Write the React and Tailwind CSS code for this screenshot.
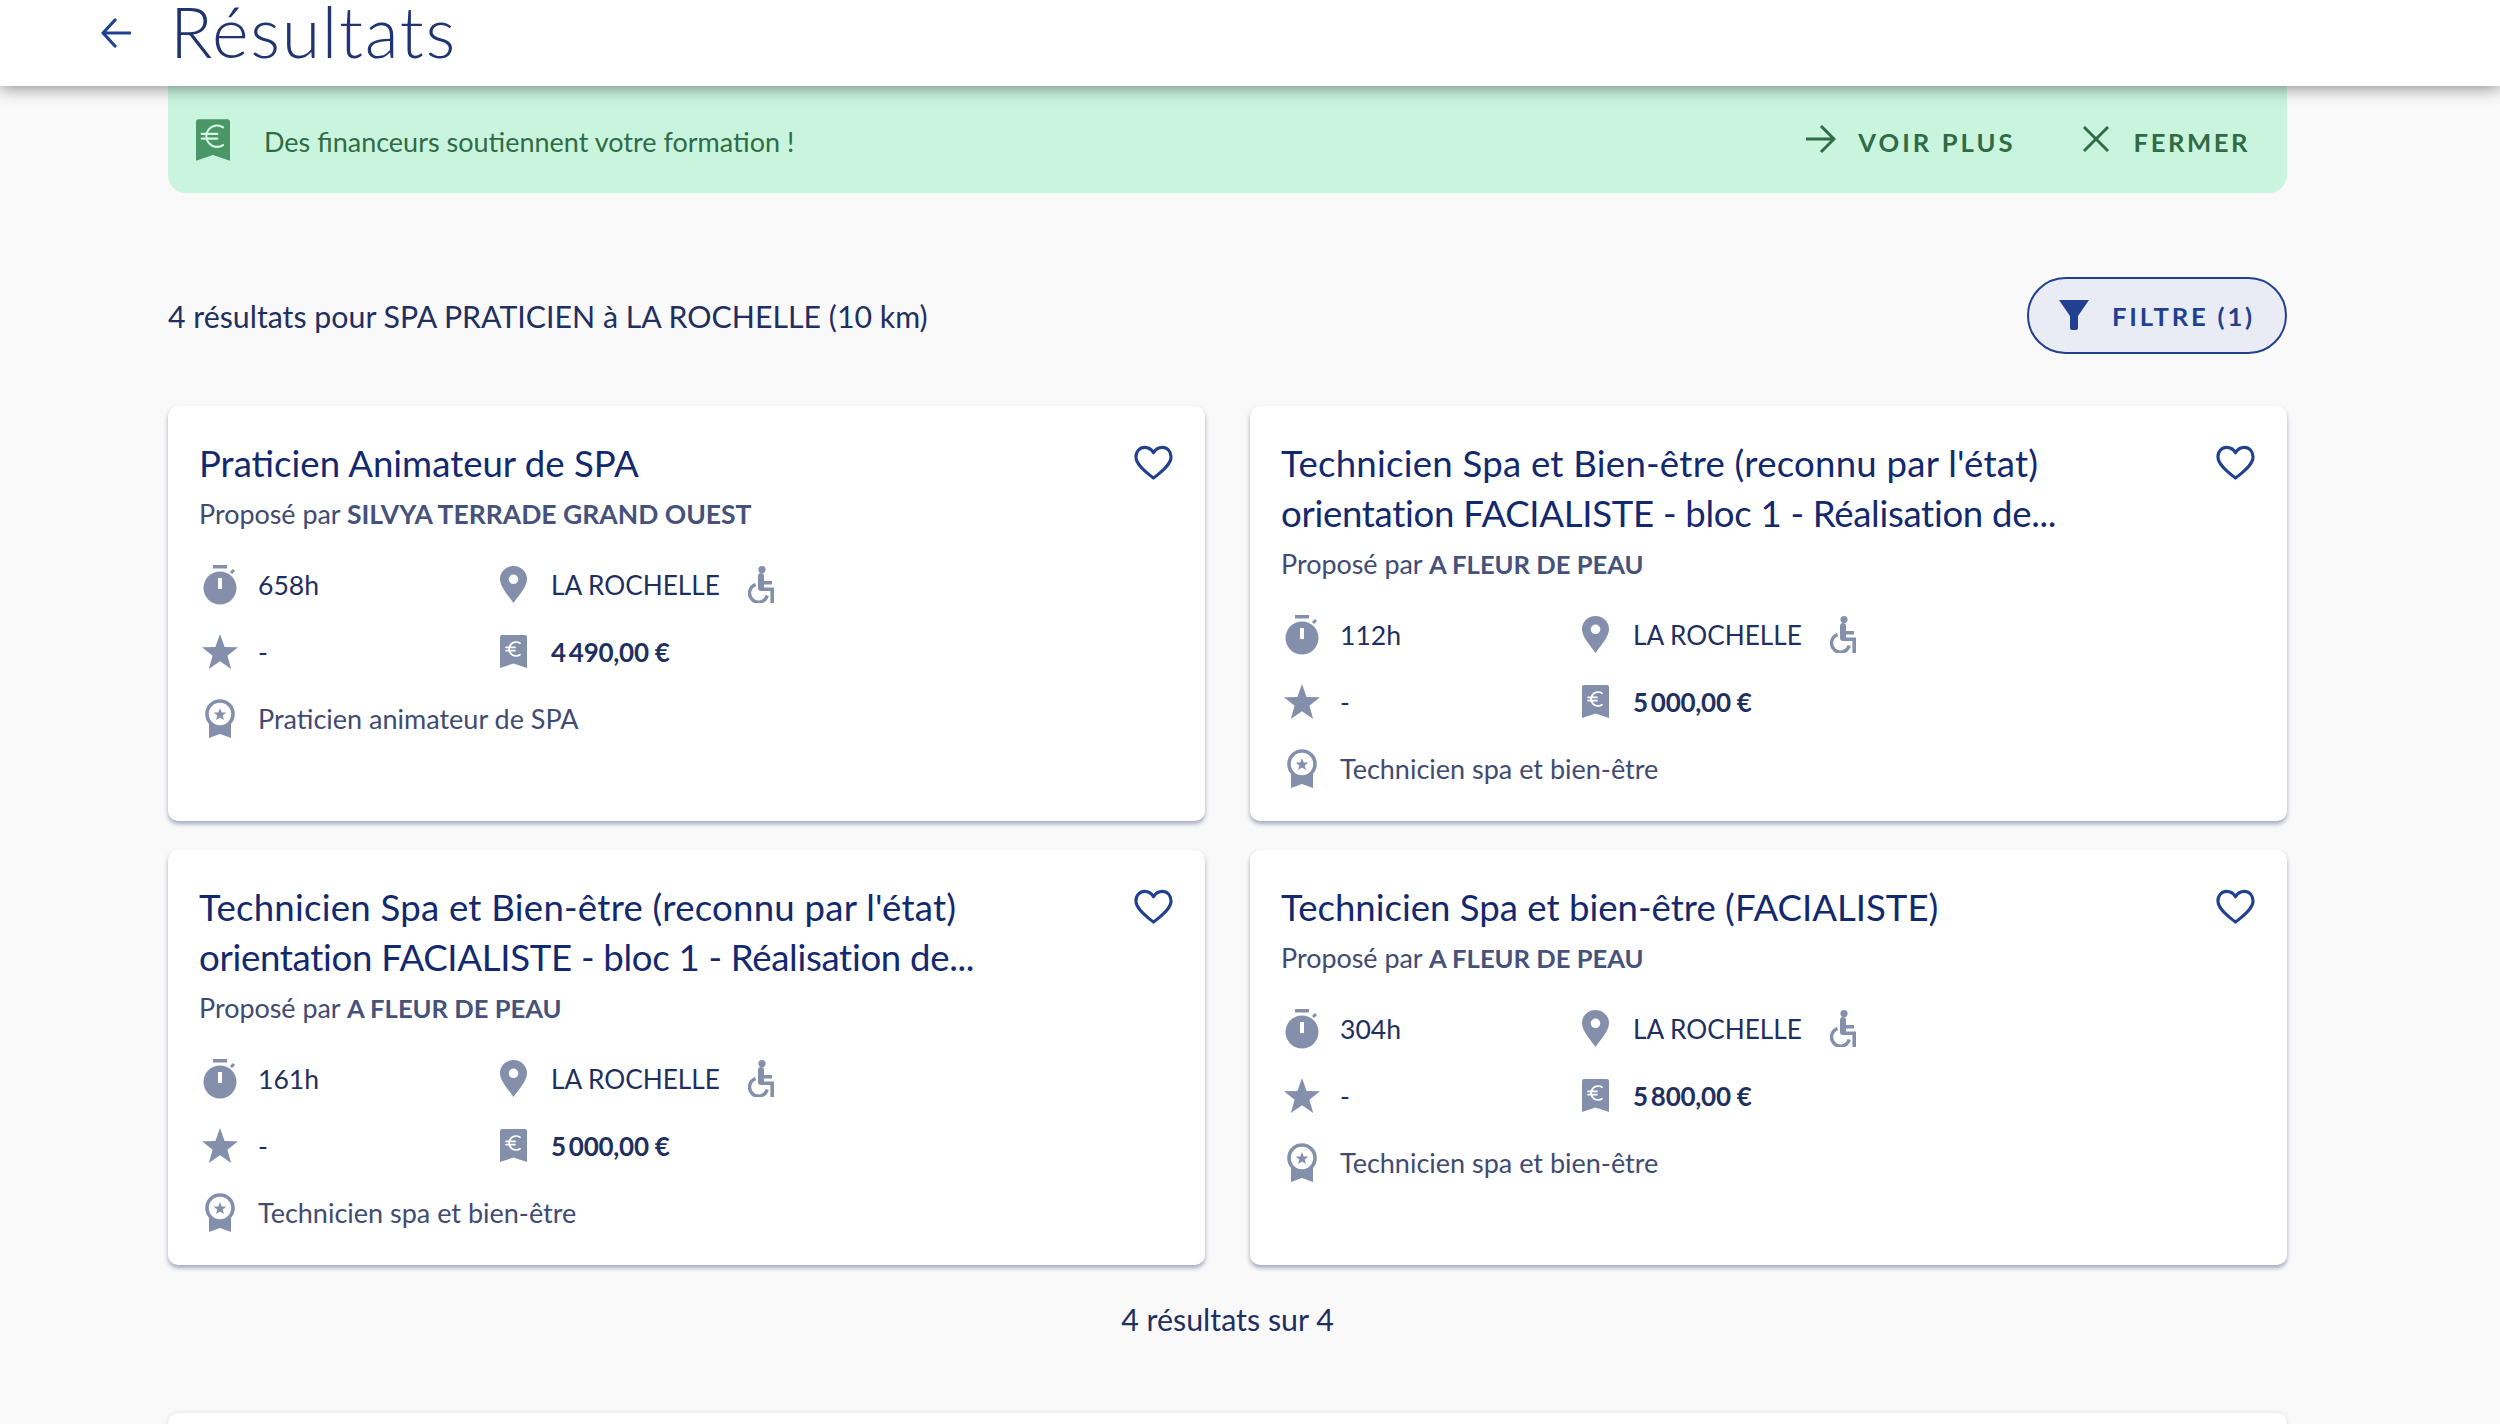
import React from "react";

const Stopwatch = () => (
  <svg viewBox="0 0 34 40" className="w-[34px] h-[40px]">
    <rect x="10" y="0" width="14" height="3.5" fill="#8490ab" />
    <path d="M28 8 L31 5" stroke="#8490ab" strokeWidth="3" />
    <circle cx="17" cy="23" r="16.5" fill="#8490ab" />
    <rect x="15" y="13" width="4" height="11" fill="#fff" />
  </svg>
);
const Star = () => (
  <svg viewBox="0 0 36 35" className="w-[36px] h-[35px]">
    <path d="M18 0 L22.6 12.9 L36 13.3 L25.4 21.7 L29.2 35 L18 27.3 L6.8 35 L10.6 21.7 L0 13.3 L13.4 12.9 Z" fill="#8490ab" />
  </svg>
);
const Medal = () => (
  <svg viewBox="0 0 30 40" className="w-[30px] h-[40px]">
    <path d="M4 23 V39 L15 35 L26 39 V23 Z" fill="#8490ab" />
    <circle cx="15" cy="15" r="13" fill="#fff" stroke="#8490ab" strokeWidth="3.6" />
    <path d="M15 9 L16.7 13.4 L21.4 13.6 L17.7 16.5 L19 21 L15 18.4 L11 21 L12.3 16.5 L8.6 13.6 L13.3 13.4 Z" fill="#8490ab" />
  </svg>
);
const Pin = () => (
  <svg viewBox="0 0 27 37" className="w-[27px] h-[37px]">
    <path fillRule="evenodd" d="M13.5 0 C21 0 27 5.8 27 13 C27 21 19 29 13.5 37 C8 29 0 21 0 13 C0 5.8 6 0 13.5 0 Z M13.5 8.5 A4.8 4.8 0 1 0 13.5 18.1 A4.8 4.8 0 1 0 13.5 8.5 Z" fill="#8490ab" />
  </svg>
);
const Euro = ({ fill, stroke, w, h, d }) => (
  <svg viewBox="0 0 27 33" style={{ width: w, height: h }}>
    <path d="M2 0 H25 A2 2 0 0 1 27 2 V33 L13.5 28.5 L0 33 V2 A2 2 0 0 1 2 0 Z" fill={fill} />
    <path d={d} fill="none" stroke={stroke} strokeWidth="1.7" strokeLinecap="round" />
  </svg>
);
const Wheelchair = () => (
  <svg viewBox="0 0 26 37" className="w-[26px] h-[37px]">
    <circle cx="14" cy="3.6" r="3.6" fill="#8490ab" />
    <path d="M10 10 A3 3 0 0 1 16 10 V15 H24 V18.4 H16 V21.5 H26 V37 H22.4 V25 H13 A3 3 0 0 1 10 22 Z" fill="#8490ab" />
    <path d="M7.6 18.6 A9 9 0 1 0 19.2 29.5" fill="none" stroke="#8490ab" strokeWidth="3.4" />
  </svg>
);
const Heart = () => (
  <svg viewBox="0 0 40 36" className="w-[39px] h-[36px]">
    <path d="M20 33.5 C14 28.5 2 20.5 2 11.5 C2 6 6 2 11 2 C14.8 2 18 4 20 7.5 C22 4 25.2 2 29 2 C34 2 38 6 38 11.5 C38 20.5 26 28.5 20 33.5 Z" fill="none" stroke="#21408f" strokeWidth="3.2" strokeLinejoin="round" />
  </svg>
);

const cards = [
  { lines: [["Praticien Animateur de SPA", ""]], org: "SILVYA TERRADE GRAND OUEST", orgCls: "font-bold text-[26.5px] text-[#45527c]", h: "658h", price: "4\u2009490,00 €", cert: "Praticien animateur de SPA" },
  { lines: [["Technicien Spa et Bien-être (reconnu par l'état)", "tracking-[0.24px]"], ["orientation FACIALISTE - bloc 1 - Réalisation de...", "tracking-[-0.3px]"]], org: "A FLEUR DE PEAU", orgCls: "font-bold text-[25.6px] text-[#45527c]", h: "112h", price: "5\u2009000,00 €", cert: "Technicien spa et bien-être" },
  { lines: [["Technicien Spa et Bien-être (reconnu par l'état)", "tracking-[0.24px]"], ["orientation FACIALISTE - bloc 1 - Réalisation de...", "tracking-[-0.3px]"]], org: "A FLEUR DE PEAU", orgCls: "font-bold text-[25.6px] text-[#45527c]", h: "161h", price: "5\u2009000,00 €", cert: "Technicien spa et bien-être" },
  { lines: [["Technicien Spa et bien-être (FACIALISTE)", ""]], org: "A FLEUR DE PEAU", orgCls: "font-bold text-[25.6px] text-[#45527c]", h: "304h", price: "5\u2009800,00 €", cert: "Technicien spa et bien-être" },
];

function Card({ c }) {
  return (
    <div className="h-[415px] bg-white rounded-[10px] shadow-[0_3px_4px_rgba(60,72,125,0.45)] pt-[32px] pl-[31px] pr-[32px]">
      <div className="flex justify-between items-start">
        <div className="text-[36.6px] leading-[50px] pb-[1px] text-[#13296f] whitespace-nowrap">
          {c.lines.map(([l, cls]) => (
            <div key={l} className={cls}>{l}</div>
          ))}
        </div>
        <div className="pt-[7px]"><Heart /></div>
      </div>
      <div className="text-[26.9px] leading-[50px] text-[#3f4b72] mb-[12px] whitespace-nowrap">
        Proposé par <span className={c.orgCls}>{c.org}</span>
      </div>
      <div className="grid grid-cols-[301px_1fr] text-[26.6px] text-[#1f2f60]">
        <div className="flex items-center h-[67px]">
          <div className="w-[42px] flex justify-center mr-[17px]"><Stopwatch /></div>
          <span className="pt-[2px]">{c.h}</span>
        </div>
        <div className="flex items-center h-[67px]">
          <div className="w-[27px] mr-[24px]"><Pin /></div>
          <span className="pt-[2px] text-[26.2px]">LA ROCHELLE</span>
          <div className="ml-[28px]"><Wheelchair /></div>
        </div>
        <div className="flex items-center h-[67px]">
          <div className="w-[42px] flex justify-center mr-[17px]"><Star /></div>
          <span className="pt-[2px]">-</span>
        </div>
        <div className="flex items-center h-[67px]">
          <div className="w-[27px] mr-[24px]"><Euro fill="#8490ab" stroke="#fff" w={27} h={33} d="M20 8.2 A7 7 0 1 0 20 19.8 M6 12.4 H15 M6 15.6 H15" /></div>
          <span className="pt-[2px] font-bold text-[26px] tracking-[-0.01em]">{c.price}</span>
        </div>
        <div className="flex items-center h-[67px] col-span-2 text-[27px] text-[#3f4b72]">
          <div className="w-[42px] flex justify-center mr-[17px]"><Medal /></div>
          <span className="pt-[2px]">{c.cert}</span>
        </div>
      </div>
    </div>
  );
}

export default function App() {
  return (
    <div className="relative h-[1424px] overflow-hidden bg-[#f9f9f9] font-['Lato',sans-serif]">
      <header className="relative z-10 h-[86px] bg-white shadow-[0_2px_16px_rgba(0,0,0,0.45)] flex items-center pl-[101px]">
        <svg viewBox="0 0 30 30" className="w-[30px] h-[30px] -mt-[20px]">
          <path d="M29 15 H2 M14 2 L2 15 L14 28" fill="none" stroke="#21408f" strokeWidth="3.2" strokeLinecap="round" strokeLinejoin="round" />
        </svg>
        <h1 className="ml-[39px] text-[70px] leading-[60px] tracking-[1.7px] -mt-[24px] font-light text-[#1f3470]">Résultats</h1>
      </header>
      <div className="ml-[168px] w-[2119px]">
        <div className="h-[107px] bg-[#c9f5df] rounded-b-[18px] flex items-center pl-[28px] pr-[37px] text-[#2f6b44]">
          <Euro fill="#4a9666" stroke="#d5f6e5" w={34} h={44} d="M21.5 6.5 A8.5 8.5 0 1 0 21.5 20.5 M4.5 11.6 H17 M4.5 15.4 H17" />
          <span className="ml-[34px] pt-[5px] text-[27px]">Des financeurs soutiennent votre formation !</span>
          <div className="ml-auto flex items-center">
            <svg viewBox="0 0 30 30" className="w-[30px] h-[30px]">
              <path d="M0 15 H28 M15 2 L28 15 L15 28" fill="none" stroke="#2f6b44" strokeWidth="3" />
            </svg>
            <span className="ml-[22px] pt-[5px] text-[25.6px] font-bold tracking-[0.12em]">VOIR PLUS</span>
            <svg viewBox="0 0 28 28" className="w-[28px] h-[28px] ml-[66px]">
              <path d="M2 2 L26 26 M26 2 L2 26" fill="none" stroke="#2f6b44" strokeWidth="3" />
            </svg>
            <span className="ml-[24px] pt-[5px] text-[25.6px] font-bold tracking-[0.1em]">FERMER</span>
          </div>
        </div>
        <div className="flex items-center justify-between mt-[84px] h-[76px] text-[#1f2f60]">
          <span className="text-[30.3px] pt-[3px]">4 résultats pour SPA PRATICIEN à LA ROCHELLE (10 km)</span>
          <button className="h-[77px] w-[260px] rounded-full border-2 border-[#21408f] bg-[#e9ecf5] flex items-center pl-[30px] text-[#21408f]">
            <svg viewBox="0 0 30 30" className="w-[30px] h-[30px]">
              <path d="M0 0 H30 L19 16 V28 A2 2 0 0 1 17 30 H13 A2 2 0 0 1 11 28 V16 Z" fill="#21408f" />
            </svg>
            <span className="ml-[23px] pt-[2px] text-[25.6px] font-bold tracking-[0.11em]">FILTRE (1)</span>
          </button>
        </div>
        <div className="grid grid-cols-2 gap-x-[45px] gap-y-[29px] mt-[53px]">
          {cards.map((c, i) => (
            <Card key={i} c={c} />
          ))}
        </div>
        <div className="text-center text-[30.4px] leading-[40px] text-[#1f2f60] mt-[34px]">4 résultats sur 4</div>
        <div className="h-[40px] bg-white rounded-t-[10px] shadow-[0_0_4px_rgba(60,72,125,0.15)] mt-[74px]" />
      </div>
    </div>
  );
}
